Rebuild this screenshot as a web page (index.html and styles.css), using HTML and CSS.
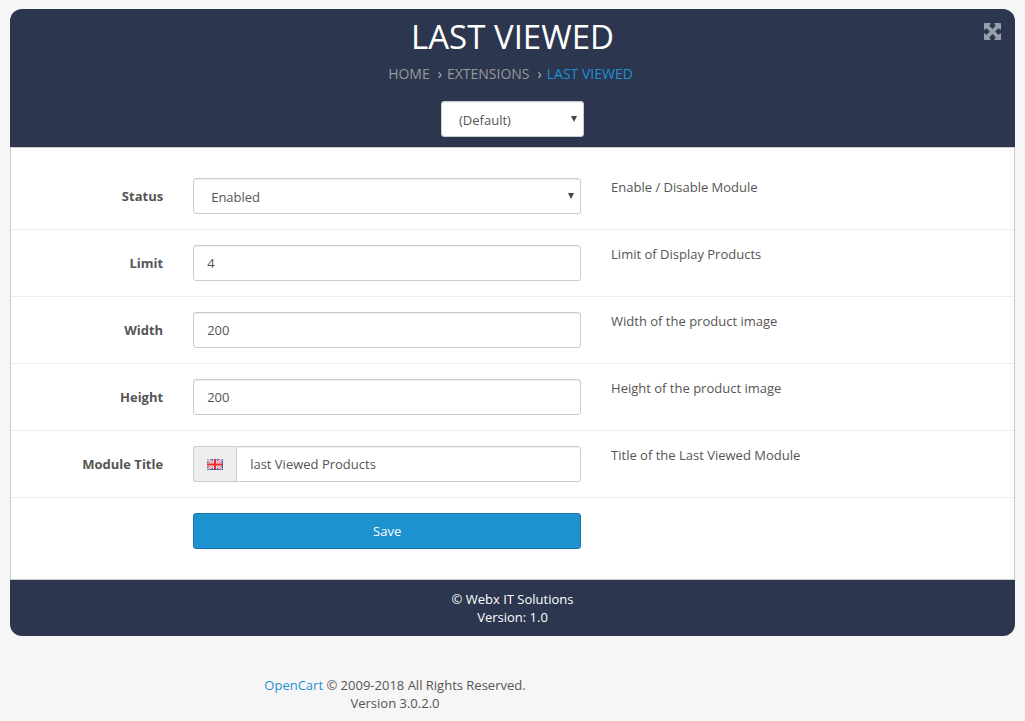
FILE: index.html
```
<!DOCTYPE html>
<html lang="en">
<head>
    <meta charset="UTF-8">
    <title>Last Viewed</title>
    <link rel="stylesheet" href="styles.css">
</head>
<body>
<div class="module">
    <header class="module-header">
        <h1>LAST VIEWED</h1>
        <nav>
            <ul class="breadcrumb">
                <li><a href="#">HOME</a></li>
                <li><a href="#">EXTENSIONS</a></li>
                <li><a href="#" class="current">LAST VIEWED</a></li>
            </ul>
        </nav>
        <div class="select store-select">
            <select class="form-control" id="store" name="store_id" aria-label="Store">
                <option>(Default)</option>
            </select>
        </div>
        <button type="button" class="expand" aria-label="Full screen">
            <svg width="17" height="17" viewBox="0 0 17 17">
                <path d="M.8 0h5.4q.8.2.4.9L5.2 2.6 8.5 5.9l3.3-3.3L10.4.9q-.4-.7.4-.9h5.4q.8 0 .8.8v5.4q-.2.8-.9.4l-1.7-1.4-3.3 3.3 3.3 3.3 1.7-1.4q.7-.4.9.4v5.4q0 .8-.8.8h-5.4q-.8-.2-.4-.9l1.4-1.7-3.3-3.3-3.3 3.3 1.4 1.7q.4.7-.4.9H.8q-.8 0-.8-.8v-5.4q.2-.8.9-.4l1.7 1.4 3.3-3.3-3.3-3.3L.9 6.6q-.7.4-.9-.4V.8Q0 0 .8 0z"/>
            </svg>
        </button>
    </header>

    <form class="module-form">
        <div class="form-group">
            <label for="status">Status</label>
            <div class="select">
                <select class="form-control" id="status" name="status">
                    <option>Enabled</option>
                    <option>Disabled</option>
                </select>
            </div>
            <p class="help">Enable / Disable Module</p>
        </div>
        <div class="form-group">
            <label for="limit">Limit</label>
            <input type="text" class="form-control" id="limit" name="limit" value="4">
            <p class="help">Limit of Display Products</p>
        </div>
        <div class="form-group">
            <label for="width">Width</label>
            <input type="text" class="form-control" id="width" name="width" value="200">
            <p class="help">Width of the product image</p>
        </div>
        <div class="form-group">
            <label for="height">Height</label>
            <input type="text" class="form-control" id="height" name="height" value="200">
            <p class="help">Height of the product image</p>
        </div>
        <div class="form-group">
            <label for="title">Module Title</label>
            <div class="input-group">
                <span class="addon">
                    <svg width="16" height="11" viewBox="0 0 16 11">
                        <rect width="16" height="11" fill="#5b74c4"/>
                        <path d="M0 0l16 11M16 0L0 11" stroke="#fff" stroke-width="2.6"/>
                        <path d="M0 0l16 11M16 0L0 11" stroke="#ee6070" stroke-width="1"/>
                        <path d="M8 0v11M0 5.5h16" stroke="#fbd5d8" stroke-width="3.6"/>
                        <path d="M8 0v11M0 5.5h16" stroke="#f02a30" stroke-width="2"/>
                        <path d="M0 10.5h16M15.5 0v11" stroke="#2b3f80" opacity=".5"/>
                    </svg>
                </span>
                <input type="text" class="form-control" id="title" name="title" value="last Viewed Products">
            </div>
            <p class="help">Title of the Last Viewed Module</p>
        </div>
        <div class="form-group">
            <button type="submit" class="save">Save</button>
        </div>
    </form>

    <footer class="module-footer">&copy; Webx IT Solutions<br>Version: 1.0</footer>
</div>

<footer class="page-footer"><a href="#">OpenCart</a> &copy; 2009-2018 All Rights Reserved.<br>Version 3.0.2.0</footer>
</body>
</html>
```
FILE: styles.css
```
* {
    box-sizing: border-box;
}
body {
    margin: 0;
    padding: 9px 10px 0;
    font-family: "Open Sans", Arial, sans-serif;
    font-size: 13px;
    line-height: 18px;
    color: #555;
    background-color: #f6f6f6;
}
a {
    color: #1e91cf;
    text-decoration: none;
}

/* header */
.module-header {
    position: relative;
    display: flex;
    flex-direction: column;
    align-items: center;
    padding: 10px 15px;
    background-color: #2c364f;
    border-radius: 12px 12px 0 0;
}
.module-header h1 {
    margin: 0;
    font-size: 33px;
    font-weight: 400;
    line-height: 36px;
    color: #fff;
}
.breadcrumb {
    display: flex;
    margin: 9px 0 17px;
    padding: 0 4px 0 0;
    list-style: none;
    font-size: 14px;
    line-height: 20px;
}
.breadcrumb a {
    color: #999;
}
.breadcrumb .current {
    color: #1e91cf;
}
.breadcrumb li + li::before {
    content: "›";
    padding: 0 5px 0 8px;
    color: #bbb;
}
.expand {
    position: absolute;
    top: 14px;
    right: 14px;
    padding: 0;
    border: none;
    background: none;
    cursor: pointer;
}
.expand svg {
    display: block;
    fill: #989eab;
}

/* form controls */
.form-control {
    display: block;
    width: 100%;
    height: 36px;
    padding: 8px 13px;
    font-family: inherit;
    font-size: 13px;
    line-height: 18px;
    color: #555;
    background-color: #fff;
    border: 1px solid #ccc;
    border-radius: 3px;
    box-shadow: inset 0 1px 1px rgba(0, 0, 0, 0.075);
}
.select {
    position: relative;
}
.select select {
    padding: 9px 17px 7px;
    appearance: none;
}
.select::after {
    content: "";
    position: absolute;
    top: 15px;
    right: 7px;
    border: 3px solid transparent;
    border-top: 6px solid #444;
    border-bottom: none;
    pointer-events: none;
}
.store-select {
    width: 143px;
}

/* form */
.module-form {
    padding: 15px 0;
    background-color: #fff;
    border: 1px solid #ccc;
}
.form-group {
    display: grid;
    grid-template-columns: 2fr 5fr 5fr;
    padding: 15px 0;
}
.form-group + .form-group {
    border-top: 1px solid #ededed;
}
.form-group > * {
    width: auto;
    min-width: 0;
    margin: 0 15px;
}
.form-group label {
    padding-top: 9px;
    font-weight: 700;
    text-align: right;
}
.input-group {
    display: flex;
}
.input-group .form-control {
    border-radius: 0 3px 3px 0;
}
.addon {
    display: flex;
    flex: none;
    align-items: center;
    justify-content: center;
    width: 43px;
    border: 1px solid #ccc;
    border-right: none;
    border-radius: 3px 0 0 3px;
    background-color: #eee;
}
.save {
    grid-column: 2;
    height: 36px;
    font-family: inherit;
    font-size: 13px;
    line-height: 18px;
    color: #fff;
    background-color: #1e91cf;
    border: 1px solid #1978ab;
    border-radius: 3px;
    cursor: pointer;
}

/* footers */
.module-footer {
    padding: 10px;
    font-weight: 500;
    text-align: center;
    color: #fff;
    background-color: #2c364f;
    border-radius: 0 0 12px 12px;
}
.page-footer {
    margin-right: 235px;
    padding-top: 40px;
    text-align: center;
}
```
